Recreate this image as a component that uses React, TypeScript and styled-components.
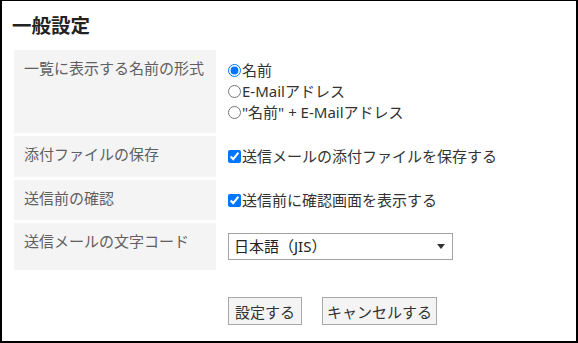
import React from 'react';
import styled, { createGlobalStyle } from 'styled-components';

const fontStack = `'Noto Sans', 'Noto Sans CJK JP', sans-serif`;

const GlobalStyle = createGlobalStyle`
  html, body {
    margin: 0;
    padding: 0;
    background: #fff;
  }
  body {
    font-family: ${fontStack};
    color: #333;
  }
`;

const Frame = styled.div`
  box-sizing: border-box;
  width: 578px;
  height: 343px;
  border-style: solid;
  border-color: #000;
  border-width: 1px 2px 2px 2px;
  padding: 0 12px;
`;

const Title = styled.h1`
  margin: 0 0 0 -2px;
  padding-top: 12px;
  height: 38px;
  box-sizing: border-box;
  font-size: 19.5px;
  line-height: 26px;
  font-weight: 700;
  color: #222;
`;

const SettingsGrid = styled.div`
  display: grid;
  grid-template-columns: 202px 1fr;
  row-gap: 3px;
  margin-top: 11px;
`;

const Label = styled.div`
  background: #f4f4f4;
  padding: 8px 10px;
  font-size: 15px;
  line-height: 21px;
  color: #606060;
`;

const Value = styled.div`
  display: flex;
  flex-direction: column;
  justify-content: center;
  padding: 10px 0 10px 12px;
  font-size: 15px;
  line-height: 21px;
  color: #333;
`;

const Option = styled.label<{ $h?: number }>`
  display: flex;
  align-items: center;
  white-space: nowrap;
  height: ${(p) => p.$h ?? 21}px;
`;

const Radio = styled.input.attrs({ type: 'radio' })`
  width: 13px;
  height: 13px;
  margin: 0 1px 0 0;
`;

const Check = styled.input.attrs({ type: 'checkbox' })`
  width: 13px;
  height: 13px;
  margin: 0 1px 0 0;
`;

const SelectBox = styled.div`
  box-sizing: border-box;
  width: 225px;
  height: 27px;
  border: 1px solid #a3a3a3;
  background: #fff;
  display: flex;
  align-items: center;
  justify-content: space-between;
  padding: 0 7px 0 5px;
  font-size: 15px;
  color: #222;
`;

const Arrow = styled.span`
  width: 0;
  height: 0;
  border-left: 4.5px solid transparent;
  border-right: 4.5px solid transparent;
  border-top: 5px solid #333;
`;

const ButtonRow = styled.div`
  display: flex;
  gap: 20px;
  margin-top: 27px;
  padding-left: 214px;
`;

const Button = styled.button<{ $pad?: number }>`
  box-sizing: border-box;
  height: 28px;
  padding: 0 ${(p) => p.$pad ?? 6}px;
  border: 1px solid #a8a8a8;
  border-radius: 0;
  background: #f4f4f4;
  font-family: ${fontStack};
  font-size: 15px;
  color: #333;
`;

export default function App() {
  return (
    <>
      <GlobalStyle />
      <Frame>
        <Title>一般設定</Title>
        <SettingsGrid>
          <Label>一覧に表示する名前の形式</Label>
          <Value>
            <Option>
              <Radio name="fmt" defaultChecked />名前
            </Option>
            <Option>
              <Radio name="fmt" />E-Mailアドレス
            </Option>
            <Option>
              <Radio name="fmt" />"名前" + E-Mailアドレス
            </Option>
          </Value>

          <Label>添付ファイルの保存</Label>
          <Value>
            <Option>
              <Check defaultChecked />送信メールの添付ファイルを保存する
            </Option>
          </Value>

          <Label>送信前の確認</Label>
          <Value>
            <Option $h={20}>
              <Check defaultChecked />送信前に確認画面を表示する
            </Option>
          </Value>

          <Label>送信メールの文字コード</Label>
          <Value>
            <SelectBox>
              <span>日本語（JIS）</span>
              <Arrow />
            </SelectBox>
          </Value>
        </SettingsGrid>
        <ButtonRow>
          <Button>設定する</Button>
          <Button $pad={4}>キャンセルする</Button>
        </ButtonRow>
      </Frame>
    </>
  );
}
